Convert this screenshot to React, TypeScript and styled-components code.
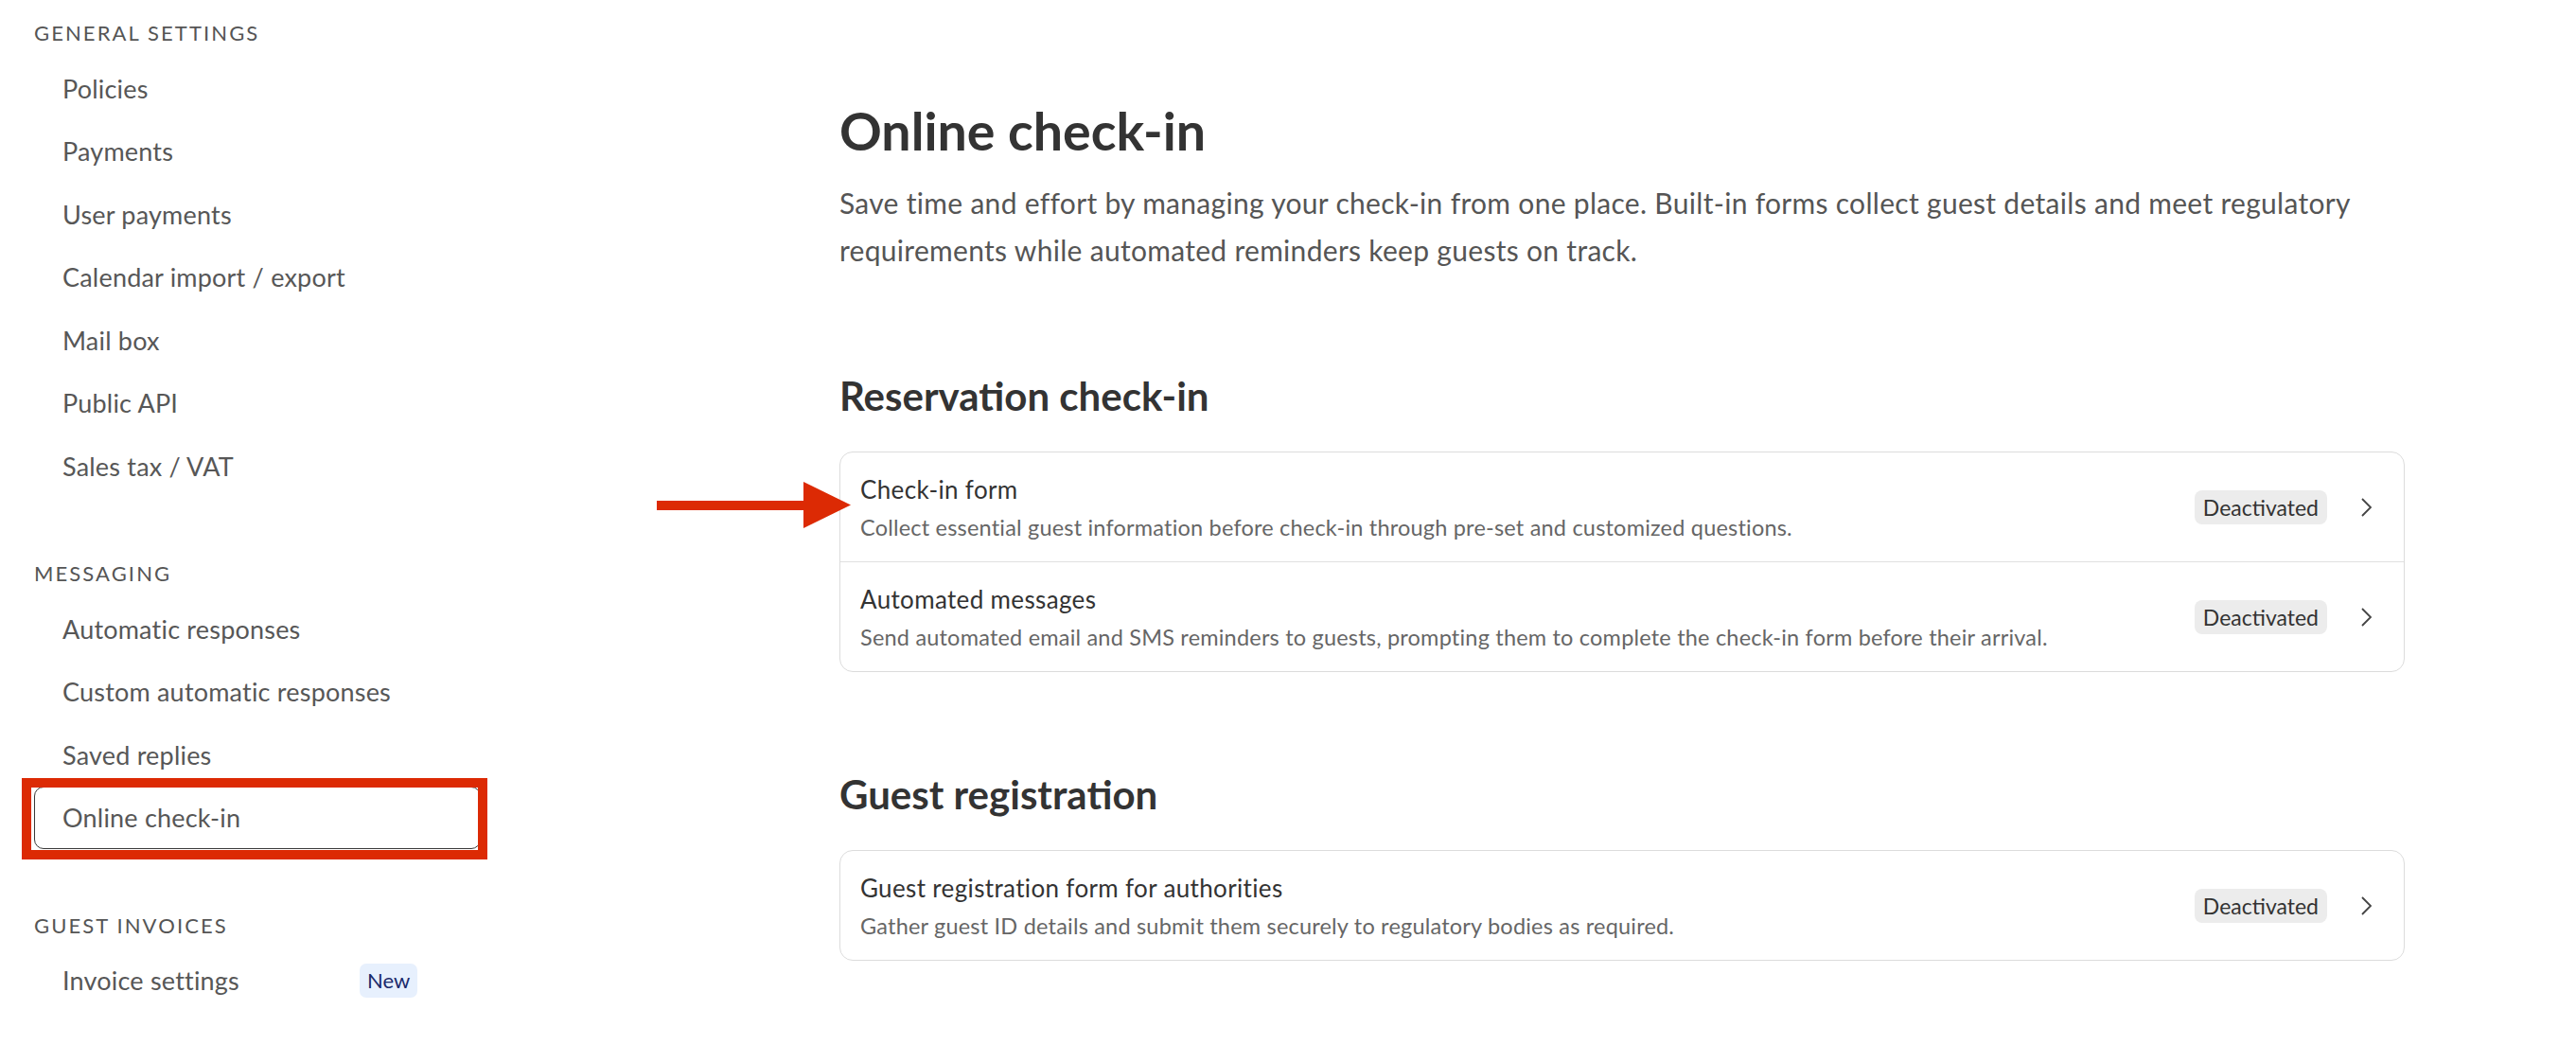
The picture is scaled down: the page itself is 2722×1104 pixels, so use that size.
import React from 'react';
import styled, { createGlobalStyle } from 'styled-components';

const GlobalStyle = createGlobalStyle`
  html, body {
    margin: 0;
    padding: 0;
    background: #ffffff;
  }
  body {
    font-family: Lato, "Noto Sans", sans-serif;
    color: #333333;
  }
`;

type NavEntry = {
    label: string;
    active?: boolean;
    badge?: string;
};

type NavSectionData = {
    title: string;
    items: NavEntry[];
};

type RowData = {
    title: string;
    text: string;
    status: string;
};

const navSections: NavSectionData[] = [
    {
        title: 'General settings',
        items: [
            { label: 'Policies' },
            { label: 'Payments' },
            { label: 'User payments' },
            { label: 'Calendar import / export' },
            { label: 'Mail box' },
            { label: 'Public API' },
            { label: 'Sales tax / VAT' },
        ],
    },
    {
        title: 'Messaging',
        items: [
            { label: 'Automatic responses' },
            { label: 'Custom automatic responses' },
            { label: 'Saved replies' },
            { label: 'Online check-in', active: true },
        ],
    },
    {
        title: 'Guest invoices',
        items: [{ label: 'Invoice settings', badge: 'New' }],
    },
];

const reservationRows: RowData[] = [
    {
        title: 'Check-in form',
        text: 'Collect essential guest information before check-in through pre-set and customized questions.',
        status: 'Deactivated',
    },
    {
        title: 'Automated messages',
        text: 'Send automated email and SMS reminders to guests, prompting them to complete the check-in form before their arrival.',
        status: 'Deactivated',
    },
];

const registrationRows: RowData[] = [
    {
        title: 'Guest registration form for authorities',
        text: 'Gather guest ID details and submit them securely to regulatory bodies as required.',
        status: 'Deactivated',
    },
];

const Page = styled.div`
  display: flex;
  align-items: flex-start;
  width: 2722px;
  min-height: 1104px;
`;

const Sidebar = styled.nav`
  box-sizing: border-box;
  width: 508px;
  flex: 0 0 508px;
  padding: 23px 0 0 36px;
  display: flex;
  flex-direction: column;
  gap: 68.5px;
`;

const NavSection = styled.section`
  display: flex;
  flex-direction: column;
`;

const SectionLabel = styled.div`
  font-size: 22px;
  line-height: 24px;
  letter-spacing: 2.1px;
  text-transform: uppercase;
  color: #555555;
  margin-bottom: 13px;
`;

const NavItem = styled.a<{ $active?: boolean }>`
  position: relative;
  box-sizing: border-box;
  display: flex;
  align-items: center;
  height: 66.5px;
  padding-left: 29px;
  font-size: 27px;
  letter-spacing: 0.2px;
  color: #575757;
  text-decoration: none;
  border-radius: 10px;
  border: 1px solid ${(p) => (p.$active ? '#3a3a3a' : 'transparent')};
  background: #ffffff;
`;

const NavText = styled.span<{ $fixed?: boolean }>`
  flex: ${(p) => (p.$fixed ? '0 0 314px' : '0 1 auto')};
`;

const NewBadge = styled.span`
  display: inline-flex;
  align-items: center;
  height: 36px;
  padding: 0 8px;
  border-radius: 7px;
  background: #e7f0fd;
  color: #1b2a6b;
  font-size: 22px;
  letter-spacing: 0;
`;

const Highlight = styled.span`
  position: absolute;
  left: -14px;
  top: -10px;
  width: 492px;
  height: 86px;
  box-sizing: border-box;
  border: 10px solid #dc2a04;
  pointer-events: none;
`;

const Main = styled.main`
  box-sizing: border-box;
  padding: 106px 0 0 379px;
  width: 2033px;
`;

const PageTitle = styled.h1`
  margin: 0;
  font-size: 55.5px;
  line-height: 64px;
  font-weight: 700;
  color: #333333;
`;

const Intro = styled.p`
  margin: 19px 0 0;
  font-size: 30px;
  line-height: 50px;
  letter-spacing: 0.3px;
  color: #555555;
`;

const SectionTitle = styled.h2`
  margin: 104px 0 34px;
  font-size: 42px;
  line-height: 50px;
  font-weight: 700;
  color: #333333;
`;

const Card = styled.div`
  position: relative;
  border: 1px solid #dcdcdc;
  border-radius: 14px;
`;

const Row = styled.div`
  display: flex;
  align-items: center;
  padding: 22px 33px 21px 21px;
  & + & {
    border-top: 1px solid #e0e0e0;
  }
`;

const RowBody = styled.div`
  flex: 1;
  display: flex;
  flex-direction: column;
  gap: 8px;
`;

const RowTitle = styled.div`
  font-size: 26px;
  line-height: 34px;
  letter-spacing: 0.35px;
  color: #333333;
`;

const RowText = styled.div`
  font-size: 23.5px;
  line-height: 30px;
  letter-spacing: 0.2px;
  color: #666666;
`;

const StatusBadge = styled.span`
  height: 36px;
  line-height: 36px;
  padding: 0 9px;
  border-radius: 8px;
  background: #ececec;
  color: #333333;
  font-size: 23px;
`;

const Chevron = styled.svg`
  margin-left: 34px;
  flex: 0 0 auto;
`;

const ArrowMark = styled.svg`
  position: absolute;
  left: -194px;
  top: 31px;
  z-index: 2;
`;

const ChevronIcon = () => (
    <Chevron width="14" height="22" viewBox="0 0 14 22">
        <path d="M3 2 L12 11 L3 20" fill="none" stroke="#444444" strokeWidth="1.8" />
    </Chevron>
);

const SettingsRow = ({ row }: { row: RowData }) => (
    <Row>
        <RowBody>
            <RowTitle>{row.title}</RowTitle>
            <RowText>{row.text}</RowText>
        </RowBody>
        <StatusBadge>{row.status}</StatusBadge>
        <ChevronIcon />
    </Row>
);

const App: React.FC = () => {
    return (
        <>
            <GlobalStyle />
            <Page>
                <Sidebar>
                    {navSections.map((section) => (
                        <NavSection key={section.title}>
                            <SectionLabel>{section.title}</SectionLabel>
                            {section.items.map((item) => (
                                <NavItem key={item.label} $active={item.active}>
                                    <NavText $fixed={!!item.badge}>{item.label}</NavText>
                                    {item.badge && <NewBadge>{item.badge}</NewBadge>}
                                    {item.active && <Highlight />}
                                </NavItem>
                            ))}
                        </NavSection>
                    ))}
                </Sidebar>

                <Main>
                    <PageTitle>Online check-in</PageTitle>
                    <Intro>
                        Save time and effort by managing your check-in from one place. Built-in forms collect guest
                        details and meet regulatory requirements while automated reminders keep guests on track.
                    </Intro>

                    <SectionTitle>Reservation check-in</SectionTitle>
                    <Card>
                        {/* annotation arrow pointing at the first row */}
                        <ArrowMark width="205" height="49" viewBox="0 0 205 49">
                            <rect x="0" y="20" width="158" height="10" fill="#dc2a04" />
                            <polygon points="155,0 205,24.5 155,49" fill="#dc2a04" />
                        </ArrowMark>
                        {reservationRows.map((row) => (
                            <SettingsRow key={row.title} row={row} />
                        ))}
                    </Card>

                    <SectionTitle>Guest registration</SectionTitle>
                    <Card>
                        {registrationRows.map((row) => (
                            <SettingsRow key={row.title} row={row} />
                        ))}
                    </Card>
                </Main>
            </Page>
        </>
    );
};

export default App;
